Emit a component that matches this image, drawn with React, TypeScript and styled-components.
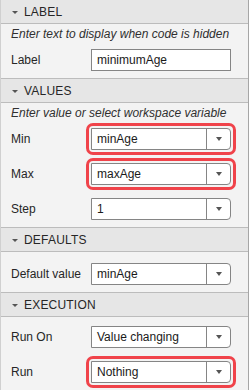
import styled, { createGlobalStyle } from "styled-components";

const GlobalStyle = createGlobalStyle`
  body {
    margin: 0;
    background: #ffffff;
    font-family: "Liberation Sans", Arial, sans-serif;
  }
`;

type Control =
  | { kind: "text"; value: string }
  | { kind: "select"; value: string; marked?: boolean };

type Field = { label: string; control: Control };

type SectionData = {
  title: string;
  hint?: string;
  padTop: number;
  fields: Field[];
};

const sections: SectionData[] = [
  {
    title: "LABEL",
    hint: "Enter text to display when code is hidden",
    padTop: 0,
    fields: [{ label: "Label", control: { kind: "text", value: "minimumAge" } }],
  },
  {
    title: "VALUES",
    hint: "Enter value or select workspace variable",
    padTop: 0,
    fields: [
      { label: "Min", control: { kind: "select", value: "minAge", marked: true } },
      { label: "Max", control: { kind: "select", value: "maxAge", marked: true } },
      { label: "Step", control: { kind: "select", value: "1" } },
    ],
  },
  {
    title: "DEFAULTS",
    padTop: 4,
    fields: [{ label: "Default value", control: { kind: "select", value: "minAge" } }],
  },
  {
    title: "EXECUTION",
    padTop: 2,
    fields: [
      { label: "Run On", control: { kind: "select", value: "Value changing" } },
      { label: "Run", control: { kind: "select", value: "Nothing", marked: true } },
    ],
  },
];

function App() {
  return (
    <>
      <GlobalStyle />
      <Styled.Panel>
        {sections.map((section) => (
          <Styled.Section key={section.title}>
            <Styled.Header>
              <Styled.Caret />
              <Styled.Title>{section.title}</Styled.Title>
            </Styled.Header>
            <Styled.Body $padTop={section.padTop}>
              {section.hint && <Styled.Hint>{section.hint}</Styled.Hint>}
              {section.fields.map((field) => (
                <Styled.Row key={field.label}>
                  <Styled.RowLabel>{field.label}</Styled.RowLabel>
                  {field.control.kind === "text" ? (
                    <Styled.TextField type="text" value={field.control.value} readOnly />
                  ) : (
                    <Styled.Dropdown $marked={!!field.control.marked}>
                      <Styled.DropValue>{field.control.value}</Styled.DropValue>
                      <Styled.DropButton>
                        <Styled.DropArrow />
                      </Styled.DropButton>
                    </Styled.Dropdown>
                  )}
                </Styled.Row>
              ))}
            </Styled.Body>
          </Styled.Section>
        ))}
      </Styled.Panel>
    </>
  );
}

export default App;

const Styled = {
  Panel: styled.div`
    width: 249px;
    height: 390px;
    box-sizing: border-box;
    border-right: 1px solid #a6a6a6;
    border-left: 1px solid #d0d0d0;
    background: #f3f3f3;
    overflow: hidden;
  `,

  Section: styled.section`
    border-bottom: 1px solid #bcbcbc;
    background: #f3f3f3;
  `,

  Header: styled.div`
    display: flex;
    align-items: center;
    gap: 6px;
    height: 23px;
    padding-left: 11px;
    background: #e6e6e6;
    border-bottom: 1px solid #bcbcbc;
  `,

  Caret: styled.span`
    width: 0;
    height: 0;
    border-left: 3px solid transparent;
    border-right: 3px solid transparent;
    border-top: 3px solid #555555;
    margin-top: 1px;
  `,

  Title: styled.span`
    font-size: 12px;
    color: #262626;
    letter-spacing: 0.2px;
  `,

  Body: styled.div<{ $padTop: number }>`
    padding: ${({ $padTop }) => $padTop}px 0 1px 0;
  `,

  Hint: styled.div`
    padding: 3px 0 0 10px;
    font-size: 12px;
    line-height: 15px;
    font-style: italic;
    color: #303030;
  `,

  Row: styled.div`
    display: flex;
    align-items: center;
    height: 35px;
    padding: 0 10px;
  `,

  RowLabel: styled.span`
    width: 80px;
    font-size: 12px;
    color: #262626;
  `,

  TextField: styled.input`
    width: 140px;
    height: 22px;
    box-sizing: border-box;
    margin: 0;
    padding: 0 5px;
    border: 1px solid #858585;
    border-radius: 0;
    background: #ffffff;

    font-family: "Liberation Sans", Arial, sans-serif;
    font-size: 12px;
    color: #1a1a1a;

    &:focus {
      outline: none;
    }
  `,

  Dropdown: styled.div<{ $marked: boolean }>`
    position: relative;
    display: flex;
    width: 140px;
    height: 22px;
    box-sizing: border-box;
    border: 1px solid #858585;
    border-radius: 0 4px 4px 0;
    background: #ffffff;

    &::after {
      content: "";
      display: ${({ $marked }) => ($marked ? "block" : "none")};
      position: absolute;
      inset: -6px;
      border: 3px solid #f0434a;
      border-radius: 7px;
      pointer-events: none;
    }
  `,

  DropValue: styled.span`
    flex: 1;
    padding-left: 5px;
    font-size: 12px;
    line-height: 20px;
    color: #1a1a1a;
    white-space: nowrap;
    overflow: hidden;
  `,

  DropButton: styled.span`
    display: flex;
    align-items: center;
    justify-content: center;
    width: 23px;
    border-left: 1px solid #858585;
  `,

  DropArrow: styled.span`
    width: 0;
    height: 0;
    border-left: 3.5px solid transparent;
    border-right: 3.5px solid transparent;
    border-top: 4px solid #555555;
  `,
};
